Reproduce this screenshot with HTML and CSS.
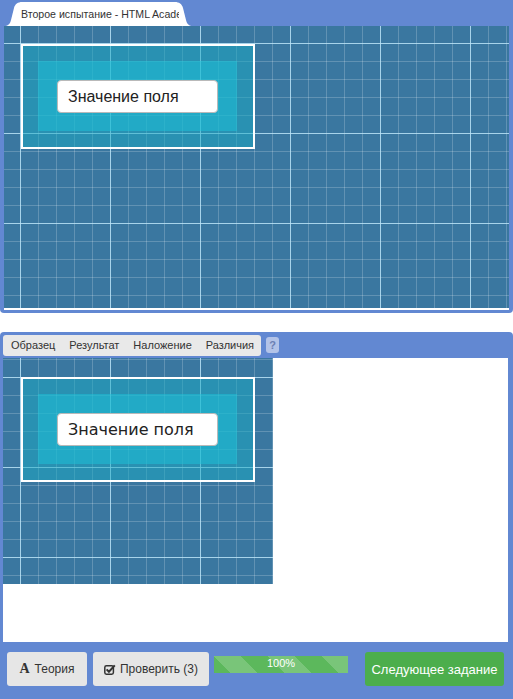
FILE: index.html
```html
<!DOCTYPE html>
<html lang="ru">
<head>
<meta charset="utf-8">
<title>Второе испытание - HTML Academy</title>
<link rel="stylesheet" href="styles.css">
</head>
<body>
<div class="panel panel-top">
  <div class="tabbar">
    <div class="tab">
      <svg class="tab-shape" width="189" height="24" viewBox="0 0 189 24" aria-hidden="true">
        <path d="M0 24 C4 24 6 22 7 18 L10 6 C11 2 14 0 18 0 L171 0 C175 0 178 2 179 6 L182 18 C183 22 185 24 189 24 Z" fill="#fff"/>
      </svg>
      <span class="tab-title">Второе испытание - HTML Academy</span>
    </div>
  </div>
  <div class="viewport grid grid-top">
    <div class="demo">
      <div class="demo-inner">
        <div class="field field-arial">Значение поля</div>
      </div>
    </div>
  </div>
</div>

<div class="panel panel-bottom">
  <div class="toolbar">
    <div class="modes">
      <span class="mode">Образец</span>
      <span class="mode">Результат</span>
      <span class="mode">Наложение</span>
      <span class="mode">Различия</span>
    </div>
    <span class="help">?</span>
  </div>
  <div class="result">
    <div class="grid grid-result">
      <div class="demo">
        <div class="demo-inner">
          <div class="field field-dejavu">Значение поля</div>
        </div>
      </div>
    </div>
  </div>
  <div class="actions">
    <button class="btn btn-theory"><span class="icon-a">A</span>Теория</button>
    <button class="btn btn-check"><svg class="icon-check" width="12" height="11" viewBox="0 0 12 11" aria-hidden="true"><rect x="0.8" y="1.8" width="8.6" height="8.4" rx="1.6" fill="none" stroke="#333" stroke-width="1.5"/><path d="M2.6 5.4 L4.9 7.7 L10.8 1.4" fill="none" stroke="#333" stroke-width="2"/></svg>Проверить (3)</button>
    <div class="progress"><span>100%</span></div>
    <button class="btn btn-next">Следующее задание</button>
  </div>
</div>
</body>
</html>
```
FILE: styles.css
```css
html, body {
  margin: 0;
  padding: 0;
  background: #fff;
  font-family: "Liberation Sans", Arial, sans-serif;
}

.panel {
  background: #6288d2;
  box-sizing: border-box;
  width: 513px;
}

.panel-top {
  padding: 0 4px 3px 4px;
  border-radius: 0 0 4px 4px;
}

.tabbar {
  height: 26px;
  display: flex;
  align-items: flex-end;
}

.tab {
  position: relative;
  width: 189px;
  height: 24px;
}

.tab-shape {
  position: absolute;
  left: 0;
  top: 0;
}

.tab-title {
  position: relative;
  display: block;
  margin-left: 17px;
  width: 158px;
  overflow: hidden;
  white-space: nowrap;
  font-size: 10.6px;
  line-height: 24px;
  color: #333;
}

.grid {
  background-color: #3a77a0;
  background-image:
    linear-gradient(to right, rgba(185, 228, 248, 0.8) 1px, transparent 1px),
    linear-gradient(to bottom, rgba(185, 228, 248, 0.8) 1px, transparent 1px),
    linear-gradient(to right, rgba(255, 255, 255, 0.2) 1px, transparent 1px),
    linear-gradient(to bottom, rgba(255, 255, 255, 0.2) 1px, transparent 1px);
  background-size: 90px 90px, 90px 90px, 18px 18px, 18px 18px;
}

.viewport {
  border-bottom: 2px solid #fff;
}

.grid-top {
  padding: 18px 0 0 17px;
  box-sizing: border-box;
  height: 284px;
  background-position: 16px 17px, 16px 17px, 16px 17px, 16px 17px;
}

.demo {
  width: 234px;
  height: 105px;
  border: 2px solid #fff;
  padding: 15px 16px 16px 15px;
  box-sizing: border-box;
  background: rgba(24, 172, 196, 0.5);
}

.demo > .demo-inner {
  width: 199px;
  height: 70px;
  box-sizing: border-box;
  padding: 19px 19px 18px 19px;
  background: rgba(27, 196, 218, 0.5);
}

.field {
  width: 161px;
  height: 33px;
  box-sizing: border-box;
  background: #fff;
  border: 1px solid #b9b9b9;
  border-radius: 4px;
  padding-left: 10px;
  font-size: 16px;
  line-height: 31px;
  color: #222;
  white-space: nowrap;
}

.field-arial {
  font-family: "Liberation Sans", Arial, sans-serif;
}

.field-dejavu {
  font-family: "DejaVu Sans", Verdana, sans-serif;
}

.panel-bottom {
  margin-top: 19px;
  height: 367px;
  padding: 3px 5px 0 3px;
  border-radius: 4px 4px 0 0;
  display: flex;
  flex-direction: column;
}

.toolbar {
  height: 21px;
  margin-bottom: 2px;
  display: flex;
  align-items: flex-start;
}

.modes {
  display: flex;
  background: #e9e9e9;
  border-radius: 3px;
  padding: 0 0 0 1px;
  width: 258px;
  box-sizing: border-box;
}

.mode {
  padding: 0 7px;
  font-size: 11px;
  line-height: 21px;
  color: #333;
  white-space: nowrap;
}

.help {
  margin-left: 5px;
  margin-top: 2px;
  width: 13px;
  height: 16px;
  border-radius: 3px;
  background: #b3c3e8;
  color: #6c80b4;
  font-size: 11px;
  font-weight: bold;
  line-height: 16px;
  text-align: center;
}

.result {
  height: 284px;
  background: #fff;
}

.grid-result {
  width: 270px;
  height: 226px;
  box-sizing: border-box;
  padding: 19px 0 0 18px;
  background-position: 17px 19px, 17px 19px, 17px 19px, 17px 19px;
}

.actions {
  flex: 1;
  display: flex;
  align-items: flex-start;
  padding: 10px 0 0 4px;
}

.btn {
  height: 34px;
  border: none;
  border-radius: 3px;
  background: #e6e6e6;
  color: #333;
  font-family: "Liberation Sans", Arial, sans-serif;
  font-size: 12px;
  padding: 0;
  display: flex;
  align-items: center;
  justify-content: center;
}

.btn-theory {
  width: 80px;
}

.icon-a {
  font-family: "Liberation Serif", "Times New Roman", serif;
  font-weight: bold;
  font-size: 14px;
  margin-right: 5px;
  color: #333;
}

.btn-check {
  width: 116px;
  margin-left: 6px;
}

.icon-check {
  margin-right: 4px;
}

.progress {
  width: 134px;
  height: 17px;
  margin-left: 5px;
  margin-top: 4px;
  background-color: #5cb85c;
  background-image: linear-gradient(45deg,
    rgba(255, 255, 255, 0.18) 25%, transparent 25%,
    transparent 50%, rgba(255, 255, 255, 0.18) 50%,
    rgba(255, 255, 255, 0.18) 75%, transparent 75%, transparent);
  background-size: 54px 54px;
  color: #fff;
  font-size: 11px;
  line-height: 15px;
  text-align: center;
}

.btn-next {
  width: 139px;
  margin-left: 17px;
  background: #4cae4c;
  color: #fff;
  font-size: 13px;
}
```
